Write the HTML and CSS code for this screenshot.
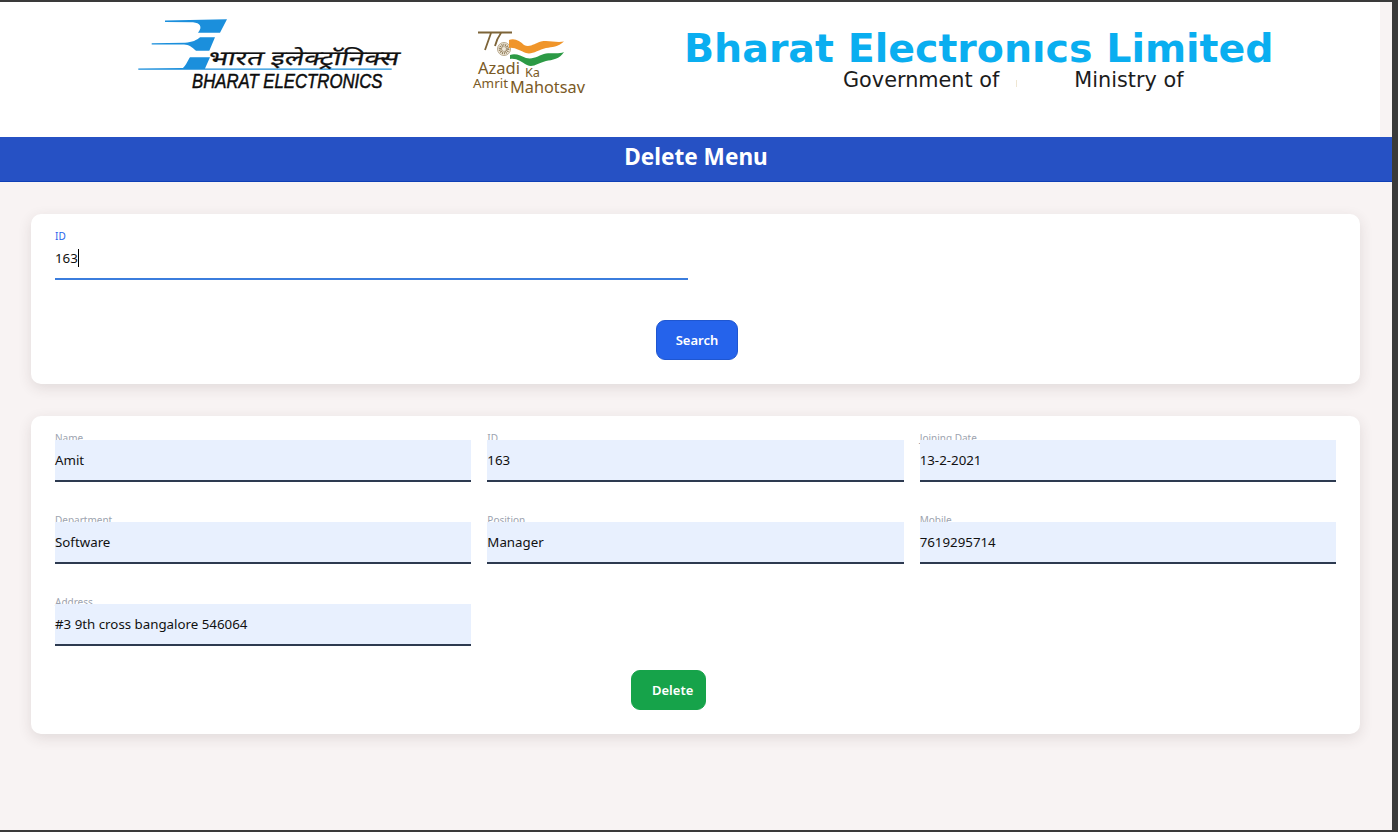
FILE: index.html
```html
<!DOCTYPE html>
<html lang="en">
<head>
<meta charset="utf-8">
<title>Delete Menu</title>
<link rel="stylesheet" href="styles.css">
</head>
<body>
<div class="window">
  <header class="masthead">
    <svg class="logo-bel" viewBox="130 15 280 80" aria-label="Bharat Electronics logo">
      <path class="bel-blue" d="M165 20.6L227 19.3L220 32.7H198C203 27 200 23 193 22.3L165 22Z"/>
      <path class="bel-blue" d="M151.7 43.2L185 42.7C192 42.5 197 40 200 37.3H215L209.3 50.7H196C192 47 189 44.7 184 44.5L151.7 44.6Z"/>
      <path class="bel-blue" d="M138.3 68.6L183 68C187 64 188 60 190 57.3H210L205 68.4H391.7V69.8H138.3Z"/>
      <text class="bel-hindi" x="207" y="65" textLength="191" lengthAdjust="spacingAndGlyphs" transform="translate(13.8 0) skewX(-12)">भारत इलेक्ट्रॉनिक्स</text>
      <text class="bel-english" transform="translate(192 88) scale(0.838 1)">BHARAT ELECTRONICS</text>
    </svg>
    <svg class="logo-azadi" viewBox="465 20 130 80" aria-label="Azadi Ka Amrit Mahotsav logo">
      <path class="azadi-stroke" d="M478 32.5H495M491 33L485 50M495 32.5H512M501 33C498 37 496 42 495 46"/>
      <circle class="azadi-wheel" cx="504" cy="49" r="6.5"/>
      <circle class="azadi-spokes" cx="504" cy="49" r="3.6"/>
      <path class="flag-orange" d="M509 40C515 38 520 41 524 45C530 48 535 43 541 41.5C549 40 556 43 564 41.5C558 47 552 47 546 48C538 50 532 55 526 53C520 51 515 47 509 48Z"/>
      <path class="flag-green" d="M510 55C516 53 521 56 526 58C534 60 539 55 546 53.5C552 52.5 558 54.5 564 52C560 59 552 60 546 61C538 63 533 68 527 65C521 62 517 58 510 59Z"/>
      <text class="azadi-text azadi-lg" x="478" y="74" textLength="42" lengthAdjust="spacingAndGlyphs">Azadi</text>
      <text class="azadi-text azadi-sm" x="525" y="77" textLength="15" lengthAdjust="spacingAndGlyphs">Ka</text>
      <text class="azadi-text azadi-sm" x="473" y="88" textLength="35" lengthAdjust="spacingAndGlyphs">Amrit</text>
      <text class="azadi-text azadi-lg" x="510" y="93" textLength="75" lengthAdjust="spacingAndGlyphs">Mahotsav</text>
    </svg>
    <div class="company">
      <div class="company-name">Bharat Electronıcs Limited</div>
      <div class="company-sub">
        <span>Government of</span>
        <i class="speck"></i>
        <span>Ministry of</span>
      </div>
    </div>
  </header>

  <div class="menu-bar"><h1 class="menu-title">Delete Menu</h1></div>

  <main class="content">
    <section class="card">
      <div class="search-grid">
        <div class="field">
          <label class="field-label field-label-active">ID</label>
          <div class="search-input">163<span class="caret"></span></div>
        </div>
      </div>
      <div class="actions actions-search">
        <button class="btn btn-blue" type="button">Search</button>
      </div>
    </section>

    <section class="card">
      <div class="fields">
        <div class="field"><label class="field-label">Name</label><div class="field-value">Amit</div></div>
        <div class="field"><label class="field-label">ID</label><div class="field-value">163</div></div>
        <div class="field"><label class="field-label">Joining Date</label><div class="field-value">13-2-2021</div></div>
        <div class="field"><label class="field-label">Department</label><div class="field-value">Software</div></div>
        <div class="field"><label class="field-label">Position</label><div class="field-value">Manager</div></div>
        <div class="field"><label class="field-label">Mobile</label><div class="field-value">7619295714</div></div>
        <div class="field"><label class="field-label">Address</label><div class="field-value">#3 9th cross bangalore 546064</div></div>
      </div>
      <div class="actions actions-delete">
        <button class="btn btn-green" type="button">Delete</button>
      </div>
    </section>
  </main>
</div>
</body>
</html>
```

FILE: styles.css
```css
* { box-sizing: border-box; }

html, body { height: 100%; }

body {
  margin: 0;
  background: #3a3a3a;
  font-family: "Noto Sans", "Open Sans", sans-serif;
  overflow: hidden;
}

.window {
  margin: 2px 6px 2px 0;
  height: 828px;
  background: #f8f3f3;
}

/* masthead */
.masthead {
  display: flex;
  align-items: flex-start;
  width: 1380px;
  height: 135px;
  padding-left: 130px;
  background: #fff;
}

.logo-bel {
  flex: none;
  width: 280px;
  height: 80px;
  margin-top: 13px;
}

.logo-azadi {
  flex: none;
  width: 130px;
  height: 80px;
  margin-top: 18px;
  margin-left: 55px;
}

.bel-blue { fill: #1b8fdc; }

.bel-hindi {
  font-family: "Noto Sans", "Liberation Sans", sans-serif;
  font-size: 20px;
  font-weight: 400;
  fill: #111;
  stroke: #111;
  stroke-width: 0.25;
}

.bel-english {
  font-family: "Liberation Sans", sans-serif;
  font-style: italic;
  font-size: 20px;
  font-weight: 400;
  fill: #0c0c0c;
  stroke: #0c0c0c;
  stroke-width: 0.5;
}

.azadi-stroke {
  fill: none;
  stroke: #7d6438;
  stroke-width: 1.8;
}

.azadi-wheel { fill: #efe8da; stroke: #a89674; stroke-width: 0.8; }
.azadi-spokes {
  fill: none;
  stroke: #8a7550;
  stroke-width: 3.4;
  stroke-dasharray: 0.8 0.8;
}
.flag-orange { fill: #f0952a; }
.flag-green { fill: #2c9a45; }

.azadi-text {
  font-family: "Noto Sans", sans-serif;
  fill: #7a5a26;
}
.azadi-lg { font-size: 17px; }
.azadi-sm { font-size: 12.5px; }

.company {
  flex: none;
  margin-left: 89px;
  margin-top: 26px;
}

.company-name {
  font-family: "DejaVu Sans", sans-serif;
  font-weight: 700;
  font-size: 39.5px;
  line-height: 40px;
  color: #0aaef0;
  white-space: nowrap;
}

.company-sub {
  display: flex;
  align-items: center;
  margin-left: 159px;
  font-family: "DejaVu Sans", sans-serif;
  font-size: 20.8px;
  line-height: 24px;
  color: #1c1c1c;
  white-space: nowrap;
}

.speck {
  width: 1px;
  height: 7px;
  margin: 6px 57px 0 17px;
  background: #efe6d2;
}

/* menu bar */
.menu-bar {
  height: 45px;
  background: #2651c4;
  border-bottom: 1px solid #0f3fb5;
}

.menu-title {
  margin: 0;
  text-align: center;
  font-family: "Noto Sans", sans-serif;
  font-size: 22.6px;
  font-weight: 700;
  line-height: 40px;
  color: #fff;
}

/* content */
.content {
  display: flex;
  flex-direction: column;
  gap: 32px;
  padding: 32px 32px 0 31px;
}

.card {
  padding: 24px;
  background: #fff;
  border-radius: 10px;
  box-shadow: 0 4px 14px rgba(60, 40, 40, 0.12);
}

/* fields */
.search-grid {
  display: grid;
  grid-template-columns: repeat(2, 1fr);
  gap: 16px;
}

.fields {
  display: grid;
  grid-template-columns: repeat(3, 1fr);
  gap: 40px 16px;
}

.field {
  position: relative;
  height: 42px;
}

.field-label {
  position: absolute;
  left: 0;
  top: -9px;
  font-size: 10px;
  line-height: 14px;
  color: #9ca3af;
}

.field-label-active { color: #2563eb; }

.search-input,
.field-value {
  position: relative;
  display: flex;
  align-items: center;
  height: 42px;
  font-family: "Noto Sans", sans-serif;
  font-size: 13.3px;
  line-height: 20px;
  color: #111;
}

.search-input { border-bottom: 2px solid #3b7ddd; }

.field-value {
  background: #e8f0fe;
  border-bottom: 2px solid #2d3a50;
}

.caret {
  width: 1px;
  height: 18px;
  margin-left: 0;
  background: #000;
}

/* buttons */
.actions {
  display: flex;
  justify-content: center;
  margin-top: 24px;
}

.actions-search { margin-top: 40px; padding-left: 3px; }
.actions-delete { padding-right: 54px; }

.btn {
  height: 40px;
  border-radius: 9px;
  font-family: "Noto Sans", sans-serif;
  font-size: 13px;
  font-weight: 600;
  color: #fff;
  cursor: pointer;
}

.btn-blue {
  width: 82px;
  background: #2563eb;
  border: 1px solid #1f56d0;
}

.btn-green {
  width: 75px;
  padding: 0 12px 0 20px;
  background: #16a34a;
  border: 1px solid #16a34a;
}
```
